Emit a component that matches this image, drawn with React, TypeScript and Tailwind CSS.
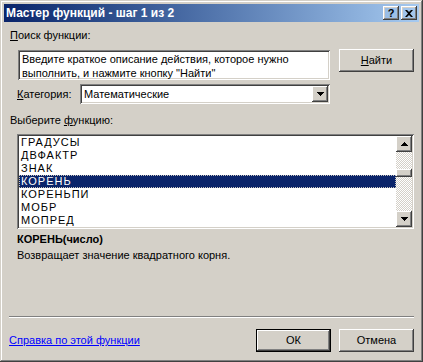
import React from "react"

const raised =
  "shadow-[inset_-1px_-1px_#404040,inset_1px_1px_#ffffff,inset_-2px_-2px_#808080,inset_2px_2px_#d4d0c8]"
const sunken =
  "shadow-[inset_1px_1px_#808080,inset_-1px_-1px_#ffffff,inset_2px_2px_#404040,inset_-2px_-2px_#d4d0c8]"

const functions = ["ГРАДУСЫ", "ДВФАКТР", "ЗНАК", "КОРЕНЬ", "КОРЕНЬПИ", "МОБР", "МОПРЕД"]

function Arrow({ up = false }: { up?: boolean }) {
  return (
    <svg width="7" height="4" viewBox="0 0 7 4" className={up ? "rotate-180" : ""}>
      <path d="M0 0h7v1H0zM1 1h5v1H1zM2 2h3v1H2zM3 3h1v1H3z" fill="#000" />
    </svg>
  )
}

function Button({ children, isDefault = false }: { children: React.ReactNode; isDefault?: boolean }) {
  if (isDefault) {
    return (
      <div className="w-[75px] h-[23px] border border-black">
        <div className={`w-full h-full flex items-center justify-center ${raised}`}>{children}</div>
      </div>
    )
  }
  return (
    <div className={`w-[75px] h-[23px] flex items-center justify-center ${raised}`}>{children}</div>
  )
}

export default function App() {
  return (
    <div
      className="w-[423px] h-[362px] bg-[#d4d0c8] p-[4px] flex flex-col text-[11px] leading-[13px] text-black shadow-[inset_-1px_-1px_#404040,inset_1px_1px_#d4d0c8,inset_-2px_-2px_#808080,inset_2px_2px_#ffffff]"
      style={{ fontFamily: '"Liberation Sans", Arial, sans-serif' }}
    >
      {/* заголовок окна */}
      <div className="h-[18px] flex items-center pl-[2px] pr-[2px] bg-gradient-to-r from-[#0a246a] to-[#a6caf0]">
        <span className="text-white font-bold text-[12px]">Мастер функций - шаг 1 из 2</span>
        <div className="ml-auto flex gap-[2px]">
          <div className={`w-[16px] h-[14px] flex items-center justify-center font-bold text-[11px] leading-none ${raised}`}>
            ?
          </div>
          <div className={`w-[16px] h-[14px] flex items-center justify-center ${raised}`}>
            <svg width="8" height="7" viewBox="0 0 8 7">
              <path d="M0 0h2l2 2 2-2h2L5 3.5 8 7H6L4 5 2 7H0l3-3.5z" fill="#000" />
            </svg>
          </div>
        </div>
      </div>

      <div className="flex-1 flex flex-col px-[5px]">
        <div className="mt-[7px] ml-[1px]">
          <span className="underline">П</span>оиск функции:
        </div>

        <div className="mt-[7px] flex items-start">
          <div className={`ml-[9px] mt-[1px] w-[312px] h-[30px] bg-white px-[4px] pt-[2px] leading-[14px] ${sunken}`}>
            Введите краткое описание действия, которое нужно
            <br />
            выполнить, и нажмите кнопку "Найти"
          </div>
          <div className="ml-auto">
            <Button>
              <span className="underline">Н</span>айти
            </Button>
          </div>
        </div>

        <div className="mt-[4px] flex items-center">
          <div className="ml-[8px] w-[63px]">
            <span className="underline">К</span>атегория:
          </div>
          <div className={`w-[250px] h-[20px] bg-white flex items-center p-[2px] ${sunken}`}>
            <span className="pl-[2px]">Математические</span>
            <div className={`ml-auto w-[16px] h-[16px] bg-[#d4d0c8] flex items-center justify-center ${raised}`}>
              <Arrow />
            </div>
          </div>
        </div>

        <div className="mt-[10px] ml-[1px]">
          Выберите <span className="underline">ф</span>ункцию:
        </div>

        <div className={`mt-[7px] ml-[8px] h-[95px] bg-white p-[2px] flex ${sunken}`}>
          <div className="flex-1 flex flex-col tracking-[1px]">
            {functions.map((name) => (
              <div
                key={name}
                className={
                  name === "КОРЕНЬ"
                    ? "h-[13px] pl-[1px] bg-[#0a246a] text-white border border-dotted border-[#c8c4bc] leading-[11px]"
                    : "h-[13px] pl-[2px]"
                }
              >
                {name}
              </div>
            ))}
          </div>
          <div className="w-[16px] flex flex-col bg-[conic-gradient(#d4d0c8_25%,#ffffff_0_50%,#d4d0c8_0_75%,#ffffff_0)] [background-size:2px_2px]">
            <div className={`h-[16px] bg-[#d4d0c8] flex items-center justify-center ${raised}`}>
              <Arrow up />
            </div>
            <div className="h-[17px]" />
            <div className={`h-[8px] bg-[#d4d0c8] ${raised}`} />
            <div className="flex-1" />
            <div className={`h-[16px] bg-[#d4d0c8] flex items-center justify-center ${raised}`}>
              <Arrow />
            </div>
          </div>
        </div>

        <div className="mt-[4px] ml-[8px] font-bold">КОРЕНЬ(число)</div>
        <div className="mt-[3px] ml-[8px]">Возвращает значение квадратного корня.</div>

        <div className="flex-1" />

        <div className="h-[2px] border-t border-t-[#808080] border-b border-b-white" />

        <div className="mt-[11px] mb-[6px] flex items-center">
          <span className="text-[#0000ff] underline">Справка по этой функции</span>
          <div className="ml-auto flex gap-[8px]">
            <Button isDefault>ОК</Button>
            <Button>Отмена</Button>
          </div>
        </div>
      </div>
    </div>
  )
}
